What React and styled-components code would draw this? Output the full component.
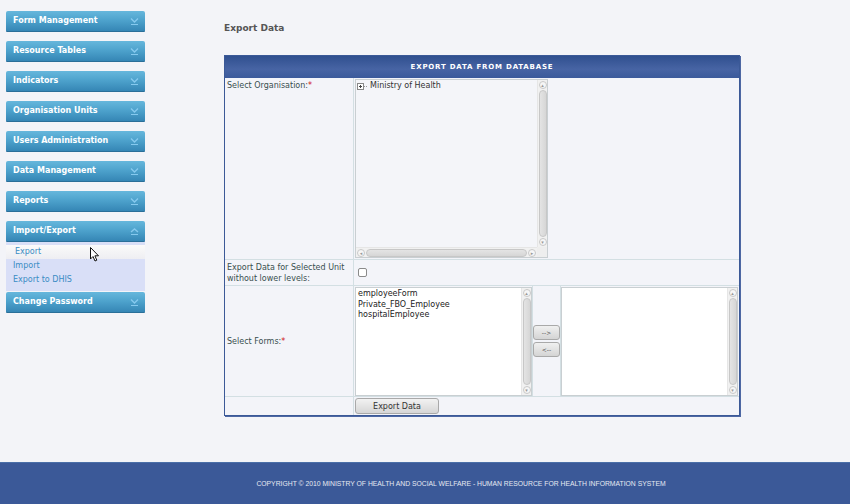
import React from "react";
import styled, { createGlobalStyle } from "styled-components";

const GlobalStyle = createGlobalStyle`
  html, body { margin: 0; padding: 0; }
  body {
    background: #f3f4f8;
    font-family: "DejaVu Sans", Verdana, sans-serif;
  }
`;

const menu = [
  { title: "Form Management" },
  { title: "Resource Tables" },
  { title: "Indicators" },
  { title: "Organisation Units" },
  { title: "Users Administration" },
  { title: "Data Management" },
  { title: "Reports" },
  { title: "Import/Export", open: true, items: ["Export", "Import", "Export to DHIS"] },
  { title: "Change Password" },
];

const forms = ["employeeForm", "Private_FBO_Employee", "hospitalEmployee"];

const Page = styled.div`
  height: 504px;
  display: flex;
  flex-direction: column;
  position: relative;
  overflow: hidden;
`;

const Body = styled.div`
  flex: 1;
  display: flex;
  align-items: flex-start;
`;

const Sidebar = styled.nav`
  width: 139px;
  margin: 11px 0 0 6px;
  display: flex;
  flex-direction: column;
  gap: 9px;
`;

const MenuGroup = styled.div`
  display: flex;
  flex-direction: column;
`;

const MenuHeader = styled.div`
  height: 21px;
  box-sizing: border-box;
  display: flex;
  align-items: center;
  justify-content: space-between;
  padding: 0 6px 1px 7px;
  background: linear-gradient(#66b7dc 0%, #4ea3cd 45%, #3586b5 100%);
  border-bottom: 1px solid #2a6f99;
  border-radius: 2px 2px 1px 1px;
  color: #fff;
  font-weight: bold;
  font-size: 8px;
`;

const SubMenu = styled.div`
  background: #d9dff7;
  padding: 3px 0 4px;
  display: flex;
  flex-direction: column;
  margin-bottom: -8px;
`;

const SubItem = styled.div`
  height: 14px;
  line-height: 14px;
  font-size: 8px;
  color: #3a8cc4;
  padding-left: ${(p) => (p.$active ? "9px" : "7px")};
  background: ${(p) => (p.$active ? "linear-gradient(#fafafa, #eeeef2)" : "transparent")};
`;

const Main = styled.main`
  margin-left: 79px;
  width: 516px;
  padding-top: 23px;
`;

const Title = styled.h2`
  margin: 0 0 22px;
  font-size: 9px;
  font-weight: bold;
  color: #555;
  line-height: 10px;
`;

const Panel = styled.div`
  border: 1px solid #3b5997;
  box-shadow: 1px 1px 0 #4d67a3;
  background: #f3f4f9;
  display: grid;
  grid-template-columns: 129px 1fr;
  grid-template-rows: 22px 181px 26px 111px 19px;
`;

const PanelHead = styled.div`
  grid-column: 1 / -1;
  background: linear-gradient(#30508f, #4764a4 60%, #3b5a9b);
  color: #fff;
  font-size: 7px;
  font-weight: bold;
  letter-spacing: 0.8px;
  display: flex;
  align-items: center;
  justify-content: center;
`;

const Label = styled.div`
  border-top: ${(p) => (p.$first ? "none" : "1px solid #d3dfe3")};
  border-right: 1px solid #d3dfe3;
  font-size: 8px;
  color: #394f4f;
  padding: ${(p) => (p.$top ? "2px 2px" : "0 2px")};
  display: flex;
  align-items: ${(p) => (p.$top ? "flex-start" : "center")};
  line-height: 11px;
`;

const Req = styled.span`
  color: #d01010;
`;

const Cell = styled.div`
  border-top: ${(p) => (p.$first ? "none" : "1px solid #d3dfe3")};
  padding: 1px;
  display: flex;
  align-items: ${(p) => p.$align || "stretch"};
  box-sizing: border-box;
  min-height: 0;
`;

const Box = styled.div`
  width: ${(p) => p.$w}px;
  height: ${(p) => p.$h}px;
  box-sizing: border-box;
  border: 1px solid #c9cfd2;
  background: ${(p) => p.$bg || "#fff"};
  display: grid;
  grid-template-columns: 1fr 10px;
  grid-template-rows: ${(p) => (p.$hbar ? "1fr 10px" : "1fr")};
`;

const BoxContent = styled.div`
  padding: ${(p) => p.$pad || "1px 2px"};
  font-size: 8px;
  color: #222;
  line-height: 10.5px;
`;

const VBar = styled.div`
  background: #f1f1f1;
  display: flex;
  flex-direction: column;
  align-items: center;
  padding: 1px 0;
  gap: 1px;
  border-left: 1px solid #e6e6e6;
`;

const HBar = styled.div`
  background: #f1f1f1;
  display: flex;
  align-items: center;
  padding: 0 1px;
  gap: 1px;
  border-top: 1px solid #e6e6e6;
`;

const Arrow = styled.div`
  width: 8px;
  height: 8px;
  border: 1px solid #c9c9c9;
  border-radius: 4px;
  box-sizing: border-box;
  background: #f6f6f6;
  font-size: 5px;
  color: #999;
  display: flex;
  align-items: center;
  justify-content: center;
  flex: none;
`;

const Thumb = styled.div`
  flex: 1;
  background: linear-gradient(${(p) => (p.$h ? "180deg" : "90deg")}, #e4e4e4, #d6d6d6);
  border: 1px solid #c7c7c7;
  border-radius: 4px;
  box-sizing: border-box;
  ${(p) => (p.$h ? "height: 8px;" : "width: 8px;")}
`;

const Corner = styled.div`
  background: #eee;
`;

const TreeItem = styled.div`
  display: flex;
  align-items: center;
  gap: 1px;
  font-size: 8px;
  color: #333;
`;

const Check = styled.div`
  width: 9px;
  height: 9px;
  box-sizing: border-box;
  border: 1px solid #8a8a8a;
  border-radius: 2px;
  background: #fff;
  margin-left: 3px;
`;

const Shuttle = styled.div`
  display: flex;
  align-items: stretch;
`;

const ShuttleCol = styled.div`
  width: 29px;
  box-sizing: border-box;
  border-left: 1px solid #d3dfe3;
  border-right: 1px solid #d3dfe3;
  margin: -1px 0;
  display: flex;
  flex-direction: column;
  justify-content: center;
  align-items: center;
  gap: 2px;
`;

const SmallBtn = styled.button`
  width: 27px;
  height: 15px;
  padding: 0;
  border: 1px solid #a9a9a9;
  border-radius: 3px;
  background: linear-gradient(#f0f0f0, #d4d4d4);
  font-size: 6px;
  color: #444;
  font-family: "DejaVu Sans", sans-serif;
`;

const ExportBtn = styled.button`
  width: 84px;
  height: 16px;
  padding: 0;
  border: 1px solid #a9a9a9;
  border-radius: 3px;
  background: linear-gradient(#f2f2f2, #d6d6d6);
  font-size: 8px;
  color: #333;
  font-family: "DejaVu Sans", sans-serif;
`;

const Footer = styled.footer`
  height: 42px;
  background: #3b5998;
  border-top: 1px solid #4a6fa8;
  box-sizing: border-box;
  display: flex;
  align-items: center;
  justify-content: center;
  color: #e6e9f2;
  font-family: "Liberation Sans", Arial, sans-serif;
  font-size: 6.8px;
  padding-left: 72px;
`;

const Cursor = styled.svg`
  position: absolute;
  left: 90px;
  top: 247px;
`;

const Chevron = ({ up }) => (
  <svg width="9" height="10" viewBox="0 0 9 10">
    <path
      d={up ? "M1 6 L4.5 3 L8 6" : "M1 2.5 L4.5 6 L8 2.5"}
      fill="none"
      stroke="#86c9ee"
      strokeWidth="1.4"
    />
    <line x1="1" y1="8.5" x2="8" y2="8.5" stroke="#86c9ee" strokeWidth="1" />
  </svg>
);

const ScrollV = () => (
  <VBar>
    <Arrow>▴</Arrow>
    <Thumb />
    <Arrow>▾</Arrow>
  </VBar>
);

const ScrollH = () => (
  <HBar>
    <Arrow>◂</Arrow>
    <Thumb $h />
    <Arrow>▸</Arrow>
  </HBar>
);

const PlusBox = () => (
  <svg width="12" height="9" viewBox="0 0 12 9">
    <rect x="0.5" y="1.5" width="6" height="6" fill="#fff" stroke="#888" />
    <path d="M2 4.5 H5 M3.5 3 V6" stroke="#444" strokeWidth="1" />
    <path d="M7 4.5 H11" stroke="#999" strokeWidth="1" strokeDasharray="1 1" />
  </svg>
);

export default function App() {
  return (
    <Page>
      <GlobalStyle />
      <Body>
        <Sidebar>
          {menu.map((m) => (
            <MenuGroup key={m.title}>
              <MenuHeader>
                <span>{m.title}</span>
                <Chevron up={m.open} />
              </MenuHeader>
              {m.items && (
                <SubMenu>
                  {m.items.map((it, i) => (
                    <SubItem key={it} $active={i === 0}>
                      {it}
                    </SubItem>
                  ))}
                </SubMenu>
              )}
            </MenuGroup>
          ))}
        </Sidebar>
        <Main>
          <Title>Export Data</Title>
          <Panel>
            <PanelHead>EXPORT DATA FROM DATABASE</PanelHead>

            <Label $first $top>
              <span>
                Select Organisation:<Req>*</Req>
              </span>
            </Label>
            <Cell $first $align="flex-start">
              <Box $w={193} $h={179} $bg="#f4f5f9" $hbar>
                <BoxContent $pad="1px 1px">
                  <TreeItem>
                    <PlusBox />
                    <span>Ministry of Health</span>
                  </TreeItem>
                </BoxContent>
                <ScrollV />
                <ScrollH />
                <Corner />
              </Box>
            </Cell>

            <Label>
              <span>
                Export Data for Selected Unit
                <br />
                without lower levels:
              </span>
            </Label>
            <Cell $align="center">
              <Check />
            </Cell>

            <Label>
              <span>
                Select Forms:<Req>*</Req>
              </span>
            </Label>
            <Cell>
              <Shuttle>
                <Box $w={177} $h={109}>
                  <BoxContent>
                    {forms.map((f) => (
                      <div key={f}>{f}</div>
                    ))}
                  </BoxContent>
                  <ScrollV />
                </Box>
                <ShuttleCol>
                  <SmallBtn>--&gt;</SmallBtn>
                  <SmallBtn>&lt;--</SmallBtn>
                </ShuttleCol>
                <Box $w={177} $h={109}>
                  <BoxContent />
                  <ScrollV />
                </Box>
              </Shuttle>
            </Cell>

            <Label />
            <Cell $align="center">
              <ExportBtn>Export Data</ExportBtn>
            </Cell>
          </Panel>
        </Main>
      </Body>
      <Footer>
        COPYRIGHT © 2010 MINISTRY OF HEALTH AND SOCIAL WELFARE - HUMAN RESOURCE FOR HEALTH INFORMATION SYSTEM
      </Footer>
      <Cursor width="10" height="16" viewBox="0 0 10 16">
        <path d="M0.5 0.5 L0.5 12 L3 9.5 L5 14 L6.8 13.2 L4.9 8.8 L8.5 8.8 Z" fill="#fff" stroke="#111" strokeWidth="1" />
      </Cursor>
    </Page>
  );
}
